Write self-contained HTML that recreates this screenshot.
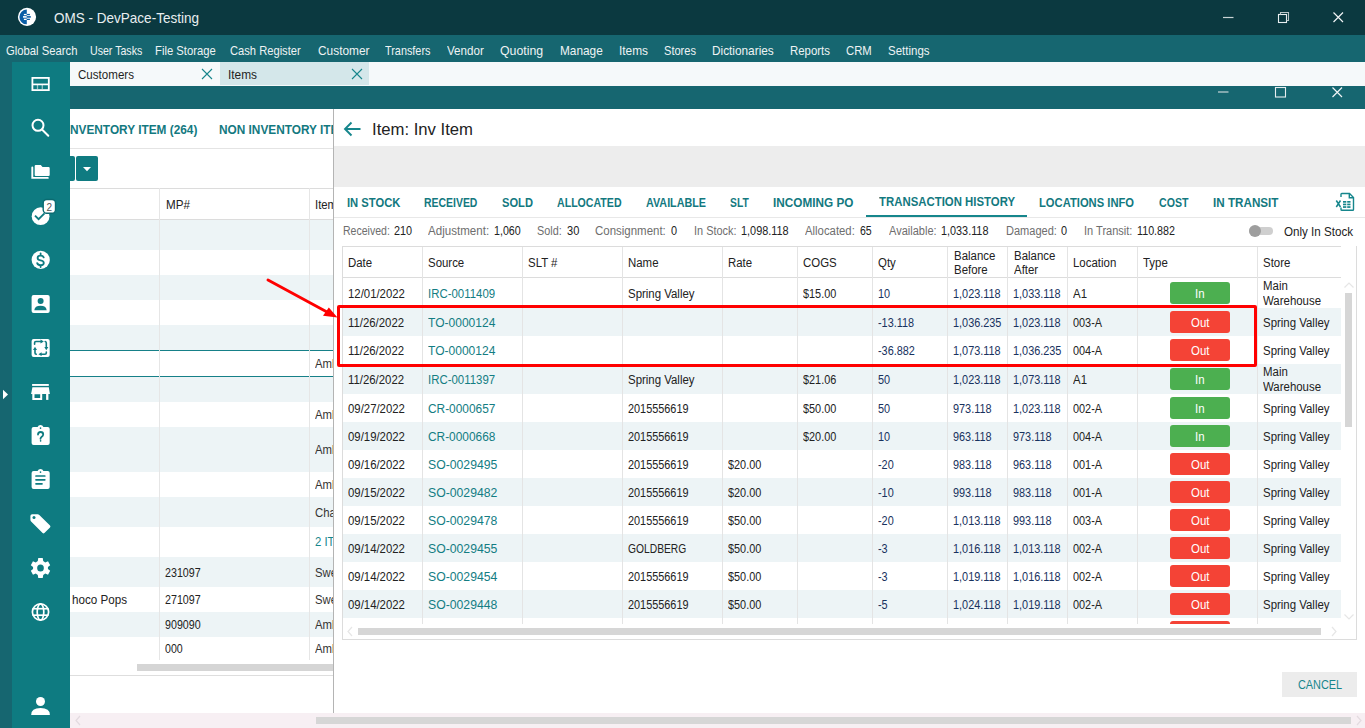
<!DOCTYPE html><html><head><meta charset="utf-8"><style>
html,body{margin:0;padding:0;}
body{width:1365px;height:728px;position:relative;overflow:hidden;background:#fff;font-family:"Liberation Sans",sans-serif;}
.t{position:absolute;white-space:nowrap;}
</style></head><body>
<div style="position:absolute;left:0px;top:0px;width:1365px;height:35px;background:#0b3940;"></div>
<svg style="position:absolute;left:17px;top:7px" width="20" height="20" viewBox="0 0 20 20">
<circle cx="10" cy="9.9" r="9.1" fill="#fff"/>
<path d="M9.8 2.5 A7.4 7.4 0 0 0 9.8 17.3 Z" fill="#0a5ea6"/>
<rect x="6.9" y="6.9" width="2.9" height="1.3" fill="#fff"/>
<rect x="6" y="9.1" width="3.8" height="1.6" fill="#fff"/>
<rect x="6.9" y="11.7" width="2.9" height="1.3" fill="#fff"/>
<rect x="9.8" y="6.9" width="3.1" height="1.3" fill="#0a5ea6"/>
<rect x="9.8" y="9.1" width="4" height="1.6" fill="#0a5ea6"/>
<rect x="9.8" y="11.7" width="3.1" height="1.3" fill="#0a5ea6"/>
</svg>
<div class="t" style="left:54.25px;top:11px;font-size:14.5px;line-height:14.5px;color:#e8eef0;transform:scaleX(0.9320);transform-origin:0 0;">OMS - DevPace-Testing</div>
<svg style="position:absolute;left:1215px;top:5px" width="140" height="25" viewBox="0 0 140 25">
<line x1="8" y1="12.5" x2="18.5" y2="12.5" stroke="#c9d3d5" stroke-width="1.2"/>
<rect x="63.5" y="9.5" width="8" height="8" fill="none" stroke="#e8eef0" stroke-width="1.1"/>
<path d="M65.5 9.5 V7.5 H73.5 V15.5 H71.5" fill="none" stroke="#b9c6c8" stroke-width="1.1"/>
<path d="M118.5 7.5 L128 17 M128 7.5 L118.5 17" stroke="#f0f4f5" stroke-width="1.2"/>
</svg>
<div style="position:absolute;left:0px;top:35px;width:1365px;height:27px;background:#166670;"></div>
<div class="t" style="left:6.00px;top:45px;font-size:12.8px;line-height:12.8px;color:#eef3f4;transform:scaleX(0.8811);transform-origin:0 0;">Global Search</div>
<div class="t" style="left:90.30px;top:45px;font-size:12.8px;line-height:12.8px;color:#eef3f4;transform:scaleX(0.8288);transform-origin:0 0;">User Tasks</div>
<div class="t" style="left:155.00px;top:45px;font-size:12.8px;line-height:12.8px;color:#eef3f4;transform:scaleX(0.8798);transform-origin:0 0;">File Storage</div>
<div class="t" style="left:230.20px;top:45px;font-size:12.8px;line-height:12.8px;color:#eef3f4;transform:scaleX(0.8724);transform-origin:0 0;">Cash Register</div>
<div class="t" style="left:317.50px;top:45px;font-size:12.8px;line-height:12.8px;color:#eef3f4;transform:scaleX(0.9292);transform-origin:0 0;">Customer</div>
<div class="t" style="left:385.30px;top:45px;font-size:12.8px;line-height:12.8px;color:#eef3f4;transform:scaleX(0.8484);transform-origin:0 0;">Transfers</div>
<div class="t" style="left:447.30px;top:45px;font-size:12.8px;line-height:12.8px;color:#eef3f4;transform:scaleX(0.9069);transform-origin:0 0;">Vendor</div>
<div class="t" style="left:500.20px;top:45px;font-size:12.8px;line-height:12.8px;color:#eef3f4;transform:scaleX(0.9621);transform-origin:0 0;">Quoting</div>
<div class="t" style="left:560.00px;top:45px;font-size:12.8px;line-height:12.8px;color:#eef3f4;transform:scaleX(0.9241);transform-origin:0 0;">Manage</div>
<div class="t" style="left:618.80px;top:45px;font-size:12.8px;line-height:12.8px;color:#eef3f4;transform:scaleX(0.9285);transform-origin:0 0;">Items</div>
<div class="t" style="left:664.00px;top:45px;font-size:12.8px;line-height:12.8px;color:#eef3f4;transform:scaleX(0.8651);transform-origin:0 0;">Stores</div>
<div class="t" style="left:712.20px;top:45px;font-size:12.8px;line-height:12.8px;color:#eef3f4;transform:scaleX(0.9234);transform-origin:0 0;">Dictionaries</div>
<div class="t" style="left:790.00px;top:45px;font-size:12.8px;line-height:12.8px;color:#eef3f4;transform:scaleX(0.8906);transform-origin:0 0;">Reports</div>
<div class="t" style="left:846.40px;top:45px;font-size:12.8px;line-height:12.8px;color:#eef3f4;transform:scaleX(0.8840);transform-origin:0 0;">CRM</div>
<div class="t" style="left:888.30px;top:45px;font-size:12.8px;line-height:12.8px;color:#eef3f4;transform:scaleX(0.8981);transform-origin:0 0;">Settings</div>
<div style="position:absolute;left:0px;top:62px;width:12px;height:666px;background:#166670;"></div>
<div style="position:absolute;left:12px;top:62px;width:58px;height:666px;background:#0e7b81;"></div>
<div style="position:absolute;left:70px;top:62px;width:1295px;height:24px;background:#f5f9fa;"></div>
<div style="position:absolute;left:220px;top:62px;width:149px;height:23px;background:#d4e7ea;"></div>
<div class="t" style="left:78.30px;top:69px;font-size:12.2px;line-height:12.2px;color:#1f1f1f;transform:scaleX(0.9503);transform-origin:0 0;">Customers</div>
<div class="t" style="left:228.00px;top:69px;font-size:12.2px;line-height:12.2px;color:#1f1f1f;transform:scaleX(0.9742);transform-origin:0 0;">Items</div>
<svg style="position:absolute;left:201px;top:68px" width="12" height="12"><path d="M1 1 L11 11 M11 1 L1 11" stroke="#16868c" stroke-width="1.1"/></svg>
<svg style="position:absolute;left:351px;top:68px" width="12" height="12"><path d="M1 1 L11 11 M11 1 L1 11" stroke="#16868c" stroke-width="1.1"/></svg>
<div style="position:absolute;left:70px;top:86px;width:1295px;height:23px;background:#166670;"></div>
<svg style="position:absolute;left:1210px;top:84px" width="145" height="18" viewBox="0 0 145 18">
<line x1="8" y1="8" x2="18.5" y2="8" stroke="#c9d6d8" stroke-width="1.2"/>
<rect x="65.5" y="3.5" width="10" height="9.5" fill="none" stroke="#e8eef0" stroke-width="1.1"/>
<path d="M122.5 3.5 L132 13 M132 3.5 L122.5 13" stroke="#f0f4f5" stroke-width="1.2"/>
</svg>
<svg style="position:absolute;left:0;top:0" width="70" height="728" viewBox="0 0 70 728">
<g fill="none" stroke="#ffffff">
 <rect x="32.4" y="77.9" width="16.4" height="12.2" stroke-width="1.8"/>
 <line x1="32.4" y1="84.4" x2="48.8" y2="84.4" stroke-width="1.7"/>
 <line x1="37.5" y1="85" x2="37.5" y2="89" stroke-width="1.3" stroke-opacity=".55"/>
 <line x1="42.3" y1="85" x2="42.3" y2="89" stroke-width="1.3" stroke-opacity=".55"/>
 <circle cx="38" cy="125.3" r="5.5" stroke-width="2"/>
 <line x1="42" y1="129.5" x2="48.3" y2="135.8" stroke-width="2" stroke-linecap="round"/>
 <path d="M32.3 167.5 V177.9 H47.8" stroke-width="1.9" stroke-linecap="round"/>
</g>
<path d="M35.8 165 H40.8 L42.5 167 H48.6 Q49.7 167 49.7 168.2 V174.9 Q49.7 176 48.6 176 H35.8 Q34.7 176 34.7 174.9 V166.1 Q34.7 165 35.8 165 Z" fill="#ffffff"/>
<circle cx="40.6" cy="216.2" r="8.9" fill="#ffffff"/>
<path d="M35 215.6 L38.6 219.2 L44.5 213.3" fill="none" stroke="#0e7b81" stroke-width="1.9"/>
<rect x="43.2" y="199.5" width="12.3" height="13.8" rx="3.5" fill="#ffffff" stroke="#0b6b71" stroke-width="1.4"/>
<text x="49.4" y="210.6" font-family="Liberation Sans" font-size="10" fill="#555" text-anchor="middle">2</text>
<circle cx="40.7" cy="259.9" r="9.1" fill="#ffffff"/>
<path d="M43.7 257.4 Q43 255.6 40.6 255.6 Q37.6 255.6 37.6 257.9 Q37.6 259.8 40.6 260.3 Q43.8 260.8 43.8 262.9 Q43.8 265.1 40.6 265.1 Q37.9 265.1 37.2 263.1 M40.6 253.3 V255.6 M40.6 265.1 V267" fill="none" stroke="#0e7b81" stroke-width="1.8" stroke-linecap="round"/>
<rect x="31.6" y="295" width="18.1" height="17.9" rx="2" fill="#ffffff"/>
<circle cx="40.6" cy="301" r="3" fill="#0e7b81"/>
<path d="M34.3 310.2 Q34.8 305.8 40.5 305.8 Q46.2 305.8 46.7 310.2 Z" fill="#0e7b81"/>
<rect x="31.6" y="339" width="18.1" height="18" rx="2" fill="#ffffff"/>
<g fill="none" stroke="#0e7b81" stroke-width="1.6" stroke-linecap="round">
 <path d="M34.6 344.2 V342.8 Q34.6 341.5 35.9 341.5 H41.2"/>
 <path d="M45.2 341.5 Q46.3 341.6 46.3 343 V346.8"/>
 <path d="M46.3 352 V353 Q46.3 354.2 45 354.2 H41"/>
 <path d="M36.3 354.3 Q35 354.2 35 353 V349.5"/>
</g>
<g fill="#0e7b81">
 <path d="M40.5 339.6 L43.8 341.5 L40.5 343.4 Z"/>
 <path d="M44.3 347 L48.3 347 L46.3 350.2 Z"/>
 <path d="M41.6 352.3 L38.4 354.2 L41.6 356.1 Z"/>
 <path d="M33 350 L37 350 L35 346.8 Z"/>
</g>
<path d="M3 389.8 L8 394.5 L3 399.2 Z" fill="#ffffff"/>
<rect x="32.1" y="384" width="16.7" height="1.9" fill="#ffffff"/>
<path d="M32.4 387.3 H48.8 L49.9 393.9 H31.1 Z" fill="#ffffff"/>
<path d="M32.3 393.9 H42.2 V399.9 H32.3 Z M34.5 394.3 V397.9 H40.2 V394.3 Z" fill="#ffffff" fill-rule="evenodd"/>
<rect x="46.1" y="393.9" width="2.3" height="6" fill="#ffffff"/>
<path d="M33.6 427 H37.6 Q38.4 425 40.5 425 Q42.6 425 43.4 427 H47.7 Q49.7 427 49.7 429 V442.9 Q49.7 444.9 47.7 444.9 H33.6 Q31.6 444.9 31.6 442.9 V429 Q31.6 427 33.6 427 Z" fill="#ffffff"/>
<rect x="39.7" y="427.3" width="1.6" height="1.8" rx=".8" fill="#0e7b81"/>
<path d="M38 434.6 Q38 432 40.6 432 Q43.2 432 43.2 434.4 Q43.2 435.9 41.5 436.9 Q40.5 437.6 40.5 438.8" fill="none" stroke="#0e7b81" stroke-width="1.8" stroke-linecap="round"/>
<rect x="39.8" y="440" width="1.6" height="1.8" rx=".7" fill="#0e7b81"/>
<path d="M33.6 471 H37.6 Q38.4 469 40.5 469 Q42.6 469 43.4 471 H47.7 Q49.7 471 49.7 473 V486.9 Q49.7 488.9 47.7 488.9 H33.6 Q31.6 488.9 31.6 486.9 V473 Q31.6 471 33.6 471 Z" fill="#ffffff"/>
<rect x="39.7" y="471.3" width="1.6" height="1.8" rx=".8" fill="#0e7b81"/>
<g stroke="#0e7b81" stroke-width="1.7" stroke-linecap="round">
 <line x1="36" y1="476" x2="44.8" y2="476"/>
 <line x1="36" y1="479.8" x2="44.8" y2="479.8"/>
 <line x1="36" y1="483.8" x2="42" y2="483.8"/>
</g>
<path d="M32.2 514.2 H37.6 Q38.6 514.2 39.3 514.9 L50 525.6 Q50.9 526.5 50 527.4 L44.4 533 Q43.5 533.9 42.6 533 L31.1 521.5 Q30.4 520.8 30.4 519.8 V516 Q30.4 514.2 32.2 514.2 Z" fill="#ffffff"/>
<circle cx="34" cy="517.5" r="1.5" fill="#0e7b81"/>
<g transform="translate(40.5 568) scale(0.93 1)">
 <path d="M-2.4 -10 H2.4 L2.9 -6.9 L5.1 -5.6 L8.1 -6.7 L10.4 -2.8 L8 -0.9 V0.9 L10.4 2.8 L8.1 6.7 L5.1 5.6 L2.9 6.9 L2.4 10 H-2.4 L-2.9 6.9 L-5.1 5.6 L-8.1 6.7 L-10.4 2.8 L-8 0.9 V-0.9 L-10.4 -2.8 L-8.1 -6.7 L-5.1 -5.6 L-2.9 -6.9 Z" fill="#ffffff"/>
 <circle r="3.6" fill="#0e7b81"/>
</g>
<g fill="none" stroke="#ffffff" stroke-width="1.7">
 <circle cx="40.5" cy="612" r="8.1"/>
 <ellipse cx="40.5" cy="612" rx="3.3" ry="8.1"/>
 <line x1="32.5" y1="608.7" x2="48.5" y2="608.7"/>
 <line x1="32.5" y1="615.2" x2="48.5" y2="615.2"/>
</g>
<circle cx="40.5" cy="701.5" r="4.5" fill="#ffffff"/>
<path d="M31.2 714.9 Q31.2 708.1 40.5 708.1 Q49.9 708.1 49.9 714.9 Z" fill="#ffffff"/>
</svg>
<div style="position:absolute;left:70px;top:109px;width:263px;height:604px;overflow:hidden;background:#fff">
<div style="position:absolute;left:-70px;top:-109px;width:1365px;height:728px"><div class="t" style="left:70.00px;top:124px;font-size:12.9px;line-height:12.9px;color:#13797f;font-weight:bold;transform:scaleX(0.9178);transform-origin:0 0;">NVENTORY ITEM (264)</div>
<div class="t" style="left:218.70px;top:124px;font-size:12.9px;line-height:12.9px;color:#13797f;font-weight:bold;transform:scaleX(0.9178);transform-origin:0 0;">NON INVENTORY ITEMS</div>
<div style="position:absolute;left:70px;top:148px;width:263px;height:1px;background:#e4e4e4;"></div>
<div style="position:absolute;left:60px;top:156px;width:14.5px;height:25px;background:#0f7b81;border-radius:0 2px 2px 0;"></div>
<div style="position:absolute;left:76.4px;top:156px;width:21.5px;height:25px;background:#0f7b81;border-radius:2px;"></div>
<svg style="position:absolute;left:82px;top:166px" width="10" height="6"><path d="M1 1 H9 L5 5.2 Z" fill="#fff"/></svg>
<div style="position:absolute;left:70px;top:188px;width:263px;height:1px;background:#dcdcdc;"></div>
<div style="position:absolute;left:70px;top:219px;width:263px;height:1px;background:#dcdcdc;"></div>
<div style="position:absolute;left:70px;top:220px;width:263px;height:30px;background:#edf4f6;"></div>
<div style="position:absolute;left:70px;top:275px;width:263px;height:25px;background:#edf4f6;"></div>
<div style="position:absolute;left:70px;top:325px;width:263px;height:25px;background:#edf4f6;"></div>
<div style="position:absolute;left:70px;top:377px;width:263px;height:25px;background:#edf4f6;"></div>
<div style="position:absolute;left:70px;top:427px;width:263px;height:45px;background:#edf4f6;"></div>
<div style="position:absolute;left:70px;top:497px;width:263px;height:30px;background:#edf4f6;"></div>
<div style="position:absolute;left:70px;top:557px;width:263px;height:30px;background:#edf4f6;"></div>
<div style="position:absolute;left:70px;top:612px;width:263px;height:25px;background:#edf4f6;"></div>
<div style="position:absolute;left:70px;top:350px;width:263px;height:1px;background:#168088;"></div>
<div style="position:absolute;left:70px;top:376px;width:263px;height:1px;background:#168088;"></div>
<div style="position:absolute;left:159px;top:188px;width:1px;height:472px;background:#e6e6e6;"></div>
<div style="position:absolute;left:309px;top:188px;width:1px;height:472px;background:#e6e6e6;"></div>
<div class="t" style="left:165.80px;top:199px;font-size:12.2px;line-height:12.2px;color:#222;transform:scaleX(0.9550);transform-origin:0 0;">MP#</div>
<div class="t" style="left:315.00px;top:199px;font-size:12.2px;line-height:12.2px;color:#222;transform:scaleX(0.9295);transform-origin:0 0;">Item</div>
<div class="t" style="left:315.00px;top:358px;font-size:12.2px;line-height:12.2px;color:#333;transform:scaleX(0.9300);transform-origin:0 0;">Ambient</div>
<div class="t" style="left:315.00px;top:409px;font-size:12.2px;line-height:12.2px;color:#333;transform:scaleX(0.9300);transform-origin:0 0;">Ambient</div>
<div class="t" style="left:315.00px;top:444px;font-size:12.2px;line-height:12.2px;color:#333;transform:scaleX(0.9300);transform-origin:0 0;">Ambient</div>
<div class="t" style="left:315.00px;top:479px;font-size:12.2px;line-height:12.2px;color:#333;transform:scaleX(0.9300);transform-origin:0 0;">Ambient</div>
<div class="t" style="left:315.00px;top:507px;font-size:12.2px;line-height:12.2px;color:#333;transform:scaleX(0.9300);transform-origin:0 0;">Chanel</div>
<div class="t" style="left:315.00px;top:567px;font-size:12.2px;line-height:12.2px;color:#333;transform:scaleX(0.9300);transform-origin:0 0;">Sweets</div>
<div class="t" style="left:315.00px;top:594px;font-size:12.2px;line-height:12.2px;color:#333;transform:scaleX(0.9300);transform-origin:0 0;">Sweets</div>
<div class="t" style="left:315.00px;top:619px;font-size:12.2px;line-height:12.2px;color:#333;transform:scaleX(0.9300);transform-origin:0 0;">Ambient</div>
<div class="t" style="left:315.00px;top:643px;font-size:12.2px;line-height:12.2px;color:#333;transform:scaleX(0.9300);transform-origin:0 0;">Ambient</div>
<div class="t" style="left:315.00px;top:536px;font-size:12.2px;line-height:12.2px;color:#16868c;transform:scaleX(0.9300);transform-origin:0 0;">2 ITEMS</div>
<div class="t" style="left:165.00px;top:567px;font-size:12.2px;line-height:12.2px;color:#222;transform:scaleX(0.8761);transform-origin:0 0;">231097</div>
<div class="t" style="left:165.00px;top:594px;font-size:12.2px;line-height:12.2px;color:#222;transform:scaleX(0.8761);transform-origin:0 0;">271097</div>
<div class="t" style="left:165.00px;top:619px;font-size:12.2px;line-height:12.2px;color:#222;transform:scaleX(0.8761);transform-origin:0 0;">909090</div>
<div class="t" style="left:165.00px;top:643px;font-size:12.2px;line-height:12.2px;color:#222;transform:scaleX(0.8700);transform-origin:0 0;">000</div>
<div class="t" style="left:71.80px;top:594px;font-size:12.2px;line-height:12.2px;color:#222;transform:scaleX(0.9548);transform-origin:0 0;">hoco Pops</div>
<div style="position:absolute;left:137px;top:664px;width:196px;height:7px;background:#d5d5d5;"></div>
<div style="position:absolute;left:70px;top:675px;width:263px;height:1px;background:#dedede;"></div></div></div>
<div style="position:absolute;left:70px;top:713px;width:1295px;height:15px;background:#f7eff3;"></div>
<svg style="position:absolute;left:74px;top:715px" width="8" height="11"><path d="M6 1 L2 5.5 L6 10" fill="none" stroke="#e3dbe0" stroke-width="1.2"/></svg>
<div style="position:absolute;left:316px;top:717px;width:1035px;height:7px;background:#d6d6d6;"></div>
<svg style="position:absolute;left:1355px;top:715px" width="8" height="11"><path d="M2 1 L6 5.5 L2 10" fill="none" stroke="#e3dbe0" stroke-width="1.2"/></svg>
<div style="position:absolute;left:333px;top:109px;width:1032px;height:604px;background:#fff;"></div>
<div style="position:absolute;left:333px;top:109px;width:1px;height:604px;background:#b4b4b4;"></div>
<svg style="position:absolute;left:343px;top:121px" width="19" height="16"><path d="M2 8 H17.5 M8.5 1.5 L2 8 L8.5 14.5" fill="none" stroke="#16868c" stroke-width="1.9"/></svg>
<div class="t" style="left:372.20px;top:122px;font-size:16px;line-height:16px;color:#222;transform:scaleX(1.0417);transform-origin:0 0;">Item: Inv Item</div>
<div style="position:absolute;left:334px;top:146px;width:1031px;height:41px;background:#ededed;"></div>
<div class="t" style="left:346.50px;top:197px;font-size:12.9px;line-height:12.9px;color:#13797f;font-weight:bold;transform:scaleX(0.8713);transform-origin:0 0;">IN STOCK</div>
<div class="t" style="left:424.30px;top:197px;font-size:12.9px;line-height:12.9px;color:#13797f;font-weight:bold;transform:scaleX(0.8101);transform-origin:0 0;">RECEIVED</div>
<div class="t" style="left:501.50px;top:197px;font-size:12.9px;line-height:12.9px;color:#13797f;font-weight:bold;transform:scaleX(0.8644);transform-origin:0 0;">SOLD</div>
<div class="t" style="left:556.90px;top:197px;font-size:12.9px;line-height:12.9px;color:#13797f;font-weight:bold;transform:scaleX(0.8223);transform-origin:0 0;">ALLOCATED</div>
<div class="t" style="left:646.00px;top:197px;font-size:12.9px;line-height:12.9px;color:#13797f;font-weight:bold;transform:scaleX(0.8350);transform-origin:0 0;">AVAILABLE</div>
<div class="t" style="left:729.70px;top:197px;font-size:12.9px;line-height:12.9px;color:#13797f;font-weight:bold;transform:scaleX(0.8009);transform-origin:0 0;">SLT</div>
<div class="t" style="left:773.20px;top:197px;font-size:12.9px;line-height:12.9px;color:#13797f;font-weight:bold;transform:scaleX(0.9125);transform-origin:0 0;">INCOMING PO</div>
<div class="t" style="left:878.50px;top:196px;font-size:12.9px;line-height:12.9px;color:#13797f;font-weight:bold;transform:scaleX(0.8836);transform-origin:0 0;">TRANSACTION HISTORY</div>
<div class="t" style="left:1039.40px;top:197px;font-size:12.9px;line-height:12.9px;color:#13797f;font-weight:bold;transform:scaleX(0.8694);transform-origin:0 0;">LOCATIONS INFO</div>
<div class="t" style="left:1159.00px;top:197px;font-size:12.9px;line-height:12.9px;color:#13797f;font-weight:bold;transform:scaleX(0.8226);transform-origin:0 0;">COST</div>
<div class="t" style="left:1213.30px;top:197px;font-size:12.9px;line-height:12.9px;color:#13797f;font-weight:bold;transform:scaleX(0.9051);transform-origin:0 0;">IN TRANSIT</div>
<div style="position:absolute;left:334px;top:217px;width:1031px;height:1px;background:#e8e8e8;"></div>
<div style="position:absolute;left:865.5px;top:215px;width:161px;height:2px;background:#16868c;"></div>
<div class="t" style="left:342.80px;top:225px;font-size:12px;line-height:12px;color:#6e6e6e;transform:scaleX(0.8783);transform-origin:0 0;">Received:</div>
<div class="t" style="left:393.90px;top:225px;font-size:12.3px;line-height:12.3px;color:#222;transform:scaleX(0.8812);transform-origin:0 0;">210</div>
<div class="t" style="left:428.20px;top:225px;font-size:12px;line-height:12px;color:#6e6e6e;transform:scaleX(0.9643);transform-origin:0 0;">Adjustment:</div>
<div class="t" style="left:494.30px;top:225px;font-size:12.3px;line-height:12.3px;color:#222;transform:scaleX(0.8683);transform-origin:0 0;">1,060</div>
<div class="t" style="left:537.30px;top:225px;font-size:12px;line-height:12px;color:#6e6e6e;transform:scaleX(0.9028);transform-origin:0 0;">Sold:</div>
<div class="t" style="left:566.70px;top:225px;font-size:12.3px;line-height:12.3px;color:#222;transform:scaleX(0.9009);transform-origin:0 0;">30</div>
<div class="t" style="left:595.40px;top:225px;font-size:12px;line-height:12px;color:#6e6e6e;transform:scaleX(0.9562);transform-origin:0 0;">Consignment:</div>
<div class="t" style="left:671.30px;top:225px;font-size:12.3px;line-height:12.3px;color:#222;transform:scaleX(0.8856);transform-origin:0 0;">0</div>
<div class="t" style="left:693.70px;top:225px;font-size:12px;line-height:12px;color:#6e6e6e;transform:scaleX(0.9105);transform-origin:0 0;">In Stock:</div>
<div class="t" style="left:741.30px;top:225px;font-size:12.3px;line-height:12.3px;color:#222;transform:scaleX(0.8856);transform-origin:0 0;">1,098.118</div>
<div class="t" style="left:805.30px;top:225px;font-size:12px;line-height:12px;color:#6e6e6e;transform:scaleX(0.9453);transform-origin:0 0;">Allocated:</div>
<div class="t" style="left:859.80px;top:225px;font-size:12.3px;line-height:12.3px;color:#222;transform:scaleX(0.8570);transform-origin:0 0;">65</div>
<div class="t" style="left:888.60px;top:225px;font-size:12px;line-height:12px;color:#6e6e6e;transform:scaleX(0.9182);transform-origin:0 0;">Available:</div>
<div class="t" style="left:941.30px;top:225px;font-size:12.3px;line-height:12.3px;color:#222;transform:scaleX(0.8818);transform-origin:0 0;">1,033.118</div>
<div class="t" style="left:1005.50px;top:225px;font-size:12px;line-height:12px;color:#6e6e6e;transform:scaleX(0.9201);transform-origin:0 0;">Damaged:</div>
<div class="t" style="left:1060.90px;top:225px;font-size:12.3px;line-height:12.3px;color:#222;transform:scaleX(0.8856);transform-origin:0 0;">0</div>
<div class="t" style="left:1083.50px;top:225px;font-size:12px;line-height:12px;color:#6e6e6e;transform:scaleX(0.9188);transform-origin:0 0;">In Transit:</div>
<div class="t" style="left:1137.40px;top:225px;font-size:12.3px;line-height:12.3px;color:#222;transform:scaleX(0.8727);transform-origin:0 0;">110.882</div>
<div style="position:absolute;left:1249px;top:227px;width:24px;height:8px;background:#cfcfcf;border-radius:4px;"></div>
<div style="position:absolute;left:1249px;top:225px;width:12px;height:12px;border-radius:6px;background:#9e9e9e"></div>
<div class="t" style="left:1283.80px;top:226px;font-size:12.3px;line-height:12.3px;color:#222;transform:scaleX(0.9440);transform-origin:0 0;">Only In Stock</div>
<svg style="position:absolute;left:1334px;top:192px" width="22" height="20" viewBox="0 0 22 20">
<path d="M7 5 V2.3 Q7 1.5 7.8 1.5 H15.5 L19.5 5.5 V17.5 Q19.5 18.3 18.7 18.3 H7.8 Q7 18.3 7 17.5 V15.5" fill="none" stroke="#16868c" stroke-width="1.4"/>
<path d="M15.3 1.8 V5.7 H19.2" fill="none" stroke="#16868c" stroke-width="1.4"/>
<path d="M2.3 8.5 L6.5 15 M6.5 8.5 L2.3 15" stroke="#16868c" stroke-width="1.5"/>
<g fill="#16868c"><rect x="9" y="9" width="3.3" height="1.7"/><rect x="13.2" y="9" width="3.3" height="1.7"/><rect x="9" y="11.6" width="3.3" height="1.7"/><rect x="13.2" y="11.6" width="3.3" height="1.7"/><rect x="9" y="14.2" width="3.3" height="1.7"/><rect x="13.2" y="14.2" width="3.3" height="1.7"/></g>
</svg>
<div style="position:absolute;left:342px;top:246px;width:999px;height:1px;background:#dcdcdc;"></div>
<div style="position:absolute;left:342px;top:246px;width:1px;height:394px;background:#dcdcdc;"></div>
<div style="position:absolute;left:1356px;top:246px;width:1px;height:394px;background:#dcdcdc;"></div>
<div style="position:absolute;left:342px;top:639px;width:1015px;height:1px;background:#dcdcdc;"></div>
<div style="position:absolute;left:343px;top:247px;width:998px;height:377px;overflow:hidden">
<div style="position:absolute;left:-343px;top:-247px;width:1365px;height:728px"><div style="position:absolute;left:343px;top:308px;width:998px;height:28px;background:#edf4f6;"></div>
<div style="position:absolute;left:343px;top:364px;width:998px;height:30px;background:#edf4f6;"></div>
<div style="position:absolute;left:343px;top:422px;width:998px;height:28px;background:#edf4f6;"></div>
<div style="position:absolute;left:343px;top:478px;width:998px;height:28px;background:#edf4f6;"></div>
<div style="position:absolute;left:343px;top:534px;width:998px;height:28px;background:#edf4f6;"></div>
<div style="position:absolute;left:343px;top:590px;width:998px;height:28px;background:#edf4f6;"></div>
<div style="position:absolute;left:343px;top:277px;width:998px;height:1px;background:#dcdcdc;"></div>
<div style="position:absolute;left:422px;top:247px;width:1px;height:377px;background:#e4e4e4;"></div>
<div style="position:absolute;left:522px;top:247px;width:1px;height:377px;background:#e4e4e4;"></div>
<div style="position:absolute;left:622px;top:247px;width:1px;height:377px;background:#e4e4e4;"></div>
<div style="position:absolute;left:722px;top:247px;width:1px;height:377px;background:#e4e4e4;"></div>
<div style="position:absolute;left:797px;top:247px;width:1px;height:377px;background:#e4e4e4;"></div>
<div style="position:absolute;left:872px;top:247px;width:1px;height:377px;background:#e4e4e4;"></div>
<div style="position:absolute;left:947px;top:247px;width:1px;height:377px;background:#e4e4e4;"></div>
<div style="position:absolute;left:1007px;top:247px;width:1px;height:377px;background:#e4e4e4;"></div>
<div style="position:absolute;left:1067px;top:247px;width:1px;height:377px;background:#e4e4e4;"></div>
<div style="position:absolute;left:1137px;top:247px;width:1px;height:377px;background:#e4e4e4;"></div>
<div style="position:absolute;left:1257px;top:247px;width:1px;height:377px;background:#e4e4e4;"></div>
<div class="t" style="left:348.20px;top:257px;font-size:12.3px;line-height:12.3px;color:#222;transform:scaleX(0.9300);transform-origin:0 0;">Date</div>
<div class="t" style="left:428.20px;top:257px;font-size:12.3px;line-height:12.3px;color:#222;transform:scaleX(0.9300);transform-origin:0 0;">Source</div>
<div class="t" style="left:528.20px;top:257px;font-size:12.3px;line-height:12.3px;color:#222;transform:scaleX(0.9300);transform-origin:0 0;">SLT #</div>
<div class="t" style="left:628.20px;top:257px;font-size:12.3px;line-height:12.3px;color:#222;transform:scaleX(0.9300);transform-origin:0 0;">Name</div>
<div class="t" style="left:728.20px;top:257px;font-size:12.3px;line-height:12.3px;color:#222;transform:scaleX(0.9300);transform-origin:0 0;">Rate</div>
<div class="t" style="left:803.20px;top:257px;font-size:12.3px;line-height:12.3px;color:#222;transform:scaleX(0.9300);transform-origin:0 0;">COGS</div>
<div class="t" style="left:878.20px;top:257px;font-size:12.3px;line-height:12.3px;color:#222;transform:scaleX(0.9300);transform-origin:0 0;">Qty</div>
<div class="t" style="left:1073.20px;top:257px;font-size:12.3px;line-height:12.3px;color:#222;transform:scaleX(0.9300);transform-origin:0 0;">Location</div>
<div class="t" style="left:1143.20px;top:257px;font-size:12.3px;line-height:12.3px;color:#222;transform:scaleX(0.9300);transform-origin:0 0;">Type</div>
<div class="t" style="left:1263.20px;top:257px;font-size:12.3px;line-height:12.3px;color:#222;transform:scaleX(0.9300);transform-origin:0 0;">Store</div>
<div class="t" style="left:953.50px;top:250px;font-size:12.3px;line-height:12.3px;color:#222;transform:scaleX(0.9300);transform-origin:0 0;">Balance</div>
<div class="t" style="left:953.50px;top:264px;font-size:12.3px;line-height:12.3px;color:#222;transform:scaleX(0.9300);transform-origin:0 0;">Before</div>
<div class="t" style="left:1013.50px;top:250px;font-size:12.3px;line-height:12.3px;color:#222;transform:scaleX(0.9300);transform-origin:0 0;">Balance</div>
<div class="t" style="left:1013.50px;top:264px;font-size:12.3px;line-height:12.3px;color:#222;transform:scaleX(0.9300);transform-origin:0 0;">After</div>
<div class="t" style="left:348.00px;top:288px;font-size:12.3px;line-height:12.3px;color:#222;transform:scaleX(0.9250);transform-origin:0 0;">12/01/2022</div>
<div class="t" style="left:428.00px;top:288px;font-size:12.3px;line-height:12.3px;color:#137d83;transform:scaleX(0.9294);transform-origin:0 0;">IRC-0011409</div>
<div class="t" style="left:628.00px;top:288px;font-size:12.3px;line-height:12.3px;color:#222;transform:scaleX(0.9300);transform-origin:0 0;">Spring Valley</div>
<div class="t" style="left:803.00px;top:288px;font-size:12.3px;line-height:12.3px;color:#222;transform:scaleX(0.8850);transform-origin:0 0;">$15.00</div>
<div class="t" style="left:878.00px;top:288px;font-size:12.3px;line-height:12.3px;color:#18325e;transform:scaleX(0.8850);transform-origin:0 0;">10</div>
<div class="t" style="left:953.00px;top:288px;font-size:12.3px;line-height:12.3px;color:#18325e;transform:scaleX(0.8850);transform-origin:0 0;">1,023.118</div>
<div class="t" style="left:1013.00px;top:288px;font-size:12.3px;line-height:12.3px;color:#18325e;transform:scaleX(0.8850);transform-origin:0 0;">1,033.118</div>
<div class="t" style="left:1073.00px;top:288px;font-size:12.3px;line-height:12.3px;color:#222;transform:scaleX(0.9300);transform-origin:0 0;">A1</div>
<div style="position:absolute;left:1170px;top:282.4px;width:60px;height:21.2px;border-radius:3px;background:#4caf50"></div>
<div class="t" style="left:1195.25px;top:288px;font-size:12.3px;line-height:12.3px;color:#fff;transform:scaleX(0.9300);transform-origin:0 0;">In</div>
<div class="t" style="left:1263.00px;top:280px;font-size:12.3px;line-height:12.3px;color:#222;transform:scaleX(0.9300);transform-origin:0 0;">Main</div>
<div class="t" style="left:1263.00px;top:295px;font-size:12.3px;line-height:12.3px;color:#222;transform:scaleX(0.9300);transform-origin:0 0;">Warehouse</div>
<div class="t" style="left:348.00px;top:317px;font-size:12.3px;line-height:12.3px;color:#222;transform:scaleX(0.9250);transform-origin:0 0;">11/26/2022</div>
<div class="t" style="left:428.00px;top:317px;font-size:12.3px;line-height:12.3px;color:#137d83;transform:scaleX(0.9785);transform-origin:0 0;">TO-0000124</div>
<div class="t" style="left:878.00px;top:317px;font-size:12.3px;line-height:12.3px;color:#18325e;transform:scaleX(0.8850);transform-origin:0 0;">-13.118</div>
<div class="t" style="left:953.00px;top:317px;font-size:12.3px;line-height:12.3px;color:#18325e;transform:scaleX(0.8850);transform-origin:0 0;">1,036.235</div>
<div class="t" style="left:1013.00px;top:317px;font-size:12.3px;line-height:12.3px;color:#18325e;transform:scaleX(0.8850);transform-origin:0 0;">1,023.118</div>
<div class="t" style="left:1073.00px;top:317px;font-size:12.3px;line-height:12.3px;color:#222;transform:scaleX(0.8850);transform-origin:0 0;">003-A</div>
<div style="position:absolute;left:1170px;top:311.4px;width:60px;height:21.2px;border-radius:3px;background:#f44336"></div>
<div class="t" style="left:1190.79px;top:317px;font-size:12.3px;line-height:12.3px;color:#fff;transform:scaleX(0.9300);transform-origin:0 0;">Out</div>
<div class="t" style="left:1263.00px;top:317px;font-size:12.3px;line-height:12.3px;color:#222;transform:scaleX(0.9300);transform-origin:0 0;">Spring Valley</div>
<div class="t" style="left:348.00px;top:345px;font-size:12.3px;line-height:12.3px;color:#222;transform:scaleX(0.9250);transform-origin:0 0;">11/26/2022</div>
<div class="t" style="left:428.00px;top:345px;font-size:12.3px;line-height:12.3px;color:#137d83;transform:scaleX(0.9785);transform-origin:0 0;">TO-0000124</div>
<div class="t" style="left:878.00px;top:345px;font-size:12.3px;line-height:12.3px;color:#18325e;transform:scaleX(0.8850);transform-origin:0 0;">-36.882</div>
<div class="t" style="left:953.00px;top:345px;font-size:12.3px;line-height:12.3px;color:#18325e;transform:scaleX(0.8850);transform-origin:0 0;">1,073.118</div>
<div class="t" style="left:1013.00px;top:345px;font-size:12.3px;line-height:12.3px;color:#18325e;transform:scaleX(0.8850);transform-origin:0 0;">1,036.235</div>
<div class="t" style="left:1073.00px;top:345px;font-size:12.3px;line-height:12.3px;color:#222;transform:scaleX(0.8850);transform-origin:0 0;">004-A</div>
<div style="position:absolute;left:1170px;top:339.4px;width:60px;height:21.2px;border-radius:3px;background:#f44336"></div>
<div class="t" style="left:1190.79px;top:345px;font-size:12.3px;line-height:12.3px;color:#fff;transform:scaleX(0.9300);transform-origin:0 0;">Out</div>
<div class="t" style="left:1263.00px;top:345px;font-size:12.3px;line-height:12.3px;color:#222;transform:scaleX(0.9300);transform-origin:0 0;">Spring Valley</div>
<div class="t" style="left:348.00px;top:374px;font-size:12.3px;line-height:12.3px;color:#222;transform:scaleX(0.9250);transform-origin:0 0;">11/26/2022</div>
<div class="t" style="left:428.00px;top:374px;font-size:12.3px;line-height:12.3px;color:#137d83;transform:scaleX(0.9294);transform-origin:0 0;">IRC-0011397</div>
<div class="t" style="left:628.00px;top:374px;font-size:12.3px;line-height:12.3px;color:#222;transform:scaleX(0.9300);transform-origin:0 0;">Spring Valley</div>
<div class="t" style="left:803.00px;top:374px;font-size:12.3px;line-height:12.3px;color:#222;transform:scaleX(0.8850);transform-origin:0 0;">$21.06</div>
<div class="t" style="left:878.00px;top:374px;font-size:12.3px;line-height:12.3px;color:#18325e;transform:scaleX(0.8850);transform-origin:0 0;">50</div>
<div class="t" style="left:953.00px;top:374px;font-size:12.3px;line-height:12.3px;color:#18325e;transform:scaleX(0.8850);transform-origin:0 0;">1,023.118</div>
<div class="t" style="left:1013.00px;top:374px;font-size:12.3px;line-height:12.3px;color:#18325e;transform:scaleX(0.8850);transform-origin:0 0;">1,073.118</div>
<div class="t" style="left:1073.00px;top:374px;font-size:12.3px;line-height:12.3px;color:#222;transform:scaleX(0.9300);transform-origin:0 0;">A1</div>
<div style="position:absolute;left:1170px;top:368.4px;width:60px;height:21.2px;border-radius:3px;background:#4caf50"></div>
<div class="t" style="left:1195.25px;top:374px;font-size:12.3px;line-height:12.3px;color:#fff;transform:scaleX(0.9300);transform-origin:0 0;">In</div>
<div class="t" style="left:1263.00px;top:366px;font-size:12.3px;line-height:12.3px;color:#222;transform:scaleX(0.9300);transform-origin:0 0;">Main</div>
<div class="t" style="left:1263.00px;top:381px;font-size:12.3px;line-height:12.3px;color:#222;transform:scaleX(0.9300);transform-origin:0 0;">Warehouse</div>
<div class="t" style="left:348.00px;top:403px;font-size:12.3px;line-height:12.3px;color:#222;transform:scaleX(0.9250);transform-origin:0 0;">09/27/2022</div>
<div class="t" style="left:428.00px;top:403px;font-size:12.3px;line-height:12.3px;color:#137d83;transform:scaleX(0.9664);transform-origin:0 0;">CR-0000657</div>
<div class="t" style="left:628.00px;top:403px;font-size:12.3px;line-height:12.3px;color:#222;transform:scaleX(0.8850);transform-origin:0 0;">2015556619</div>
<div class="t" style="left:803.00px;top:403px;font-size:12.3px;line-height:12.3px;color:#222;transform:scaleX(0.8850);transform-origin:0 0;">$50.00</div>
<div class="t" style="left:878.00px;top:403px;font-size:12.3px;line-height:12.3px;color:#18325e;transform:scaleX(0.8850);transform-origin:0 0;">50</div>
<div class="t" style="left:953.00px;top:403px;font-size:12.3px;line-height:12.3px;color:#18325e;transform:scaleX(0.8850);transform-origin:0 0;">973.118</div>
<div class="t" style="left:1013.00px;top:403px;font-size:12.3px;line-height:12.3px;color:#18325e;transform:scaleX(0.8850);transform-origin:0 0;">1,023.118</div>
<div class="t" style="left:1073.00px;top:403px;font-size:12.3px;line-height:12.3px;color:#222;transform:scaleX(0.8850);transform-origin:0 0;">002-A</div>
<div style="position:absolute;left:1170px;top:397.4px;width:60px;height:21.2px;border-radius:3px;background:#4caf50"></div>
<div class="t" style="left:1195.25px;top:403px;font-size:12.3px;line-height:12.3px;color:#fff;transform:scaleX(0.9300);transform-origin:0 0;">In</div>
<div class="t" style="left:1263.00px;top:403px;font-size:12.3px;line-height:12.3px;color:#222;transform:scaleX(0.9300);transform-origin:0 0;">Spring Valley</div>
<div class="t" style="left:348.00px;top:431px;font-size:12.3px;line-height:12.3px;color:#222;transform:scaleX(0.9250);transform-origin:0 0;">09/19/2022</div>
<div class="t" style="left:428.00px;top:431px;font-size:12.3px;line-height:12.3px;color:#137d83;transform:scaleX(0.9664);transform-origin:0 0;">CR-0000668</div>
<div class="t" style="left:628.00px;top:431px;font-size:12.3px;line-height:12.3px;color:#222;transform:scaleX(0.8850);transform-origin:0 0;">2015556619</div>
<div class="t" style="left:803.00px;top:431px;font-size:12.3px;line-height:12.3px;color:#222;transform:scaleX(0.8850);transform-origin:0 0;">$20.00</div>
<div class="t" style="left:878.00px;top:431px;font-size:12.3px;line-height:12.3px;color:#18325e;transform:scaleX(0.8850);transform-origin:0 0;">10</div>
<div class="t" style="left:953.00px;top:431px;font-size:12.3px;line-height:12.3px;color:#18325e;transform:scaleX(0.8850);transform-origin:0 0;">963.118</div>
<div class="t" style="left:1013.00px;top:431px;font-size:12.3px;line-height:12.3px;color:#18325e;transform:scaleX(0.8850);transform-origin:0 0;">973.118</div>
<div class="t" style="left:1073.00px;top:431px;font-size:12.3px;line-height:12.3px;color:#222;transform:scaleX(0.8850);transform-origin:0 0;">004-A</div>
<div style="position:absolute;left:1170px;top:425.4px;width:60px;height:21.2px;border-radius:3px;background:#4caf50"></div>
<div class="t" style="left:1195.25px;top:431px;font-size:12.3px;line-height:12.3px;color:#fff;transform:scaleX(0.9300);transform-origin:0 0;">In</div>
<div class="t" style="left:1263.00px;top:431px;font-size:12.3px;line-height:12.3px;color:#222;transform:scaleX(0.9300);transform-origin:0 0;">Spring Valley</div>
<div class="t" style="left:348.00px;top:459px;font-size:12.3px;line-height:12.3px;color:#222;transform:scaleX(0.9250);transform-origin:0 0;">09/16/2022</div>
<div class="t" style="left:428.00px;top:459px;font-size:12.3px;line-height:12.3px;color:#137d83;transform:scaleX(0.9951);transform-origin:0 0;">SO-0029495</div>
<div class="t" style="left:628.00px;top:459px;font-size:12.3px;line-height:12.3px;color:#222;transform:scaleX(0.8850);transform-origin:0 0;">2015556619</div>
<div class="t" style="left:728.00px;top:459px;font-size:12.3px;line-height:12.3px;color:#222;transform:scaleX(0.8850);transform-origin:0 0;">$20.00</div>
<div class="t" style="left:878.00px;top:459px;font-size:12.3px;line-height:12.3px;color:#18325e;transform:scaleX(0.8850);transform-origin:0 0;">-20</div>
<div class="t" style="left:953.00px;top:459px;font-size:12.3px;line-height:12.3px;color:#18325e;transform:scaleX(0.8850);transform-origin:0 0;">983.118</div>
<div class="t" style="left:1013.00px;top:459px;font-size:12.3px;line-height:12.3px;color:#18325e;transform:scaleX(0.8850);transform-origin:0 0;">963.118</div>
<div class="t" style="left:1073.00px;top:459px;font-size:12.3px;line-height:12.3px;color:#222;transform:scaleX(0.8850);transform-origin:0 0;">001-A</div>
<div style="position:absolute;left:1170px;top:453.4px;width:60px;height:21.2px;border-radius:3px;background:#f44336"></div>
<div class="t" style="left:1190.79px;top:459px;font-size:12.3px;line-height:12.3px;color:#fff;transform:scaleX(0.9300);transform-origin:0 0;">Out</div>
<div class="t" style="left:1263.00px;top:459px;font-size:12.3px;line-height:12.3px;color:#222;transform:scaleX(0.9300);transform-origin:0 0;">Spring Valley</div>
<div class="t" style="left:348.00px;top:487px;font-size:12.3px;line-height:12.3px;color:#222;transform:scaleX(0.9250);transform-origin:0 0;">09/15/2022</div>
<div class="t" style="left:428.00px;top:487px;font-size:12.3px;line-height:12.3px;color:#137d83;transform:scaleX(0.9951);transform-origin:0 0;">SO-0029482</div>
<div class="t" style="left:628.00px;top:487px;font-size:12.3px;line-height:12.3px;color:#222;transform:scaleX(0.8850);transform-origin:0 0;">2015556619</div>
<div class="t" style="left:728.00px;top:487px;font-size:12.3px;line-height:12.3px;color:#222;transform:scaleX(0.8850);transform-origin:0 0;">$20.00</div>
<div class="t" style="left:878.00px;top:487px;font-size:12.3px;line-height:12.3px;color:#18325e;transform:scaleX(0.8850);transform-origin:0 0;">-10</div>
<div class="t" style="left:953.00px;top:487px;font-size:12.3px;line-height:12.3px;color:#18325e;transform:scaleX(0.8850);transform-origin:0 0;">993.118</div>
<div class="t" style="left:1013.00px;top:487px;font-size:12.3px;line-height:12.3px;color:#18325e;transform:scaleX(0.8850);transform-origin:0 0;">983.118</div>
<div class="t" style="left:1073.00px;top:487px;font-size:12.3px;line-height:12.3px;color:#222;transform:scaleX(0.8850);transform-origin:0 0;">001-A</div>
<div style="position:absolute;left:1170px;top:481.4px;width:60px;height:21.2px;border-radius:3px;background:#f44336"></div>
<div class="t" style="left:1190.79px;top:487px;font-size:12.3px;line-height:12.3px;color:#fff;transform:scaleX(0.9300);transform-origin:0 0;">Out</div>
<div class="t" style="left:1263.00px;top:487px;font-size:12.3px;line-height:12.3px;color:#222;transform:scaleX(0.9300);transform-origin:0 0;">Spring Valley</div>
<div class="t" style="left:348.00px;top:515px;font-size:12.3px;line-height:12.3px;color:#222;transform:scaleX(0.9250);transform-origin:0 0;">09/15/2022</div>
<div class="t" style="left:428.00px;top:515px;font-size:12.3px;line-height:12.3px;color:#137d83;transform:scaleX(0.9951);transform-origin:0 0;">SO-0029478</div>
<div class="t" style="left:628.00px;top:515px;font-size:12.3px;line-height:12.3px;color:#222;transform:scaleX(0.8850);transform-origin:0 0;">2015556619</div>
<div class="t" style="left:728.00px;top:515px;font-size:12.3px;line-height:12.3px;color:#222;transform:scaleX(0.8850);transform-origin:0 0;">$50.00</div>
<div class="t" style="left:878.00px;top:515px;font-size:12.3px;line-height:12.3px;color:#18325e;transform:scaleX(0.8850);transform-origin:0 0;">-20</div>
<div class="t" style="left:953.00px;top:515px;font-size:12.3px;line-height:12.3px;color:#18325e;transform:scaleX(0.8850);transform-origin:0 0;">1,013.118</div>
<div class="t" style="left:1013.00px;top:515px;font-size:12.3px;line-height:12.3px;color:#18325e;transform:scaleX(0.8850);transform-origin:0 0;">993.118</div>
<div class="t" style="left:1073.00px;top:515px;font-size:12.3px;line-height:12.3px;color:#222;transform:scaleX(0.8850);transform-origin:0 0;">003-A</div>
<div style="position:absolute;left:1170px;top:509.4px;width:60px;height:21.2px;border-radius:3px;background:#f44336"></div>
<div class="t" style="left:1190.79px;top:515px;font-size:12.3px;line-height:12.3px;color:#fff;transform:scaleX(0.9300);transform-origin:0 0;">Out</div>
<div class="t" style="left:1263.00px;top:515px;font-size:12.3px;line-height:12.3px;color:#222;transform:scaleX(0.9300);transform-origin:0 0;">Spring Valley</div>
<div class="t" style="left:348.00px;top:543px;font-size:12.3px;line-height:12.3px;color:#222;transform:scaleX(0.9250);transform-origin:0 0;">09/14/2022</div>
<div class="t" style="left:428.00px;top:543px;font-size:12.3px;line-height:12.3px;color:#137d83;transform:scaleX(0.9951);transform-origin:0 0;">SO-0029455</div>
<div class="t" style="left:628.00px;top:543px;font-size:12.3px;line-height:12.3px;color:#222;transform:scaleX(0.8360);transform-origin:0 0;">GOLDBERG</div>
<div class="t" style="left:728.00px;top:543px;font-size:12.3px;line-height:12.3px;color:#222;transform:scaleX(0.8850);transform-origin:0 0;">$50.00</div>
<div class="t" style="left:878.00px;top:543px;font-size:12.3px;line-height:12.3px;color:#18325e;transform:scaleX(0.8850);transform-origin:0 0;">-3</div>
<div class="t" style="left:953.00px;top:543px;font-size:12.3px;line-height:12.3px;color:#18325e;transform:scaleX(0.8850);transform-origin:0 0;">1,016.118</div>
<div class="t" style="left:1013.00px;top:543px;font-size:12.3px;line-height:12.3px;color:#18325e;transform:scaleX(0.8850);transform-origin:0 0;">1,013.118</div>
<div class="t" style="left:1073.00px;top:543px;font-size:12.3px;line-height:12.3px;color:#222;transform:scaleX(0.8850);transform-origin:0 0;">002-A</div>
<div style="position:absolute;left:1170px;top:537.4px;width:60px;height:21.2px;border-radius:3px;background:#f44336"></div>
<div class="t" style="left:1190.79px;top:543px;font-size:12.3px;line-height:12.3px;color:#fff;transform:scaleX(0.9300);transform-origin:0 0;">Out</div>
<div class="t" style="left:1263.00px;top:543px;font-size:12.3px;line-height:12.3px;color:#222;transform:scaleX(0.9300);transform-origin:0 0;">Spring Valley</div>
<div class="t" style="left:348.00px;top:571px;font-size:12.3px;line-height:12.3px;color:#222;transform:scaleX(0.9250);transform-origin:0 0;">09/14/2022</div>
<div class="t" style="left:428.00px;top:571px;font-size:12.3px;line-height:12.3px;color:#137d83;transform:scaleX(0.9951);transform-origin:0 0;">SO-0029454</div>
<div class="t" style="left:628.00px;top:571px;font-size:12.3px;line-height:12.3px;color:#222;transform:scaleX(0.8850);transform-origin:0 0;">2015556619</div>
<div class="t" style="left:728.00px;top:571px;font-size:12.3px;line-height:12.3px;color:#222;transform:scaleX(0.8850);transform-origin:0 0;">$50.00</div>
<div class="t" style="left:878.00px;top:571px;font-size:12.3px;line-height:12.3px;color:#18325e;transform:scaleX(0.8850);transform-origin:0 0;">-3</div>
<div class="t" style="left:953.00px;top:571px;font-size:12.3px;line-height:12.3px;color:#18325e;transform:scaleX(0.8850);transform-origin:0 0;">1,019.118</div>
<div class="t" style="left:1013.00px;top:571px;font-size:12.3px;line-height:12.3px;color:#18325e;transform:scaleX(0.8850);transform-origin:0 0;">1,016.118</div>
<div class="t" style="left:1073.00px;top:571px;font-size:12.3px;line-height:12.3px;color:#222;transform:scaleX(0.8850);transform-origin:0 0;">002-A</div>
<div style="position:absolute;left:1170px;top:565.4px;width:60px;height:21.2px;border-radius:3px;background:#f44336"></div>
<div class="t" style="left:1190.79px;top:571px;font-size:12.3px;line-height:12.3px;color:#fff;transform:scaleX(0.9300);transform-origin:0 0;">Out</div>
<div class="t" style="left:1263.00px;top:571px;font-size:12.3px;line-height:12.3px;color:#222;transform:scaleX(0.9300);transform-origin:0 0;">Spring Valley</div>
<div class="t" style="left:348.00px;top:599px;font-size:12.3px;line-height:12.3px;color:#222;transform:scaleX(0.9250);transform-origin:0 0;">09/14/2022</div>
<div class="t" style="left:428.00px;top:599px;font-size:12.3px;line-height:12.3px;color:#137d83;transform:scaleX(0.9951);transform-origin:0 0;">SO-0029448</div>
<div class="t" style="left:628.00px;top:599px;font-size:12.3px;line-height:12.3px;color:#222;transform:scaleX(0.8850);transform-origin:0 0;">2015556619</div>
<div class="t" style="left:728.00px;top:599px;font-size:12.3px;line-height:12.3px;color:#222;transform:scaleX(0.8850);transform-origin:0 0;">$50.00</div>
<div class="t" style="left:878.00px;top:599px;font-size:12.3px;line-height:12.3px;color:#18325e;transform:scaleX(0.8850);transform-origin:0 0;">-5</div>
<div class="t" style="left:953.00px;top:599px;font-size:12.3px;line-height:12.3px;color:#18325e;transform:scaleX(0.8850);transform-origin:0 0;">1,024.118</div>
<div class="t" style="left:1013.00px;top:599px;font-size:12.3px;line-height:12.3px;color:#18325e;transform:scaleX(0.8850);transform-origin:0 0;">1,019.118</div>
<div class="t" style="left:1073.00px;top:599px;font-size:12.3px;line-height:12.3px;color:#222;transform:scaleX(0.8850);transform-origin:0 0;">002-A</div>
<div style="position:absolute;left:1170px;top:593.4px;width:60px;height:21.2px;border-radius:3px;background:#f44336"></div>
<div class="t" style="left:1190.79px;top:599px;font-size:12.3px;line-height:12.3px;color:#fff;transform:scaleX(0.9300);transform-origin:0 0;">Out</div>
<div class="t" style="left:1263.00px;top:599px;font-size:12.3px;line-height:12.3px;color:#222;transform:scaleX(0.9300);transform-origin:0 0;">Spring Valley</div>
<div class="t" style="left:348.00px;top:627px;font-size:12.3px;line-height:12.3px;color:#222;transform:scaleX(0.9250);transform-origin:0 0;">09/14/2022</div>
<div class="t" style="left:428.00px;top:627px;font-size:12.3px;line-height:12.3px;color:#137d83;transform:scaleX(0.9951);transform-origin:0 0;">SO-0029447</div>
<div class="t" style="left:628.00px;top:627px;font-size:12.3px;line-height:12.3px;color:#222;transform:scaleX(0.8850);transform-origin:0 0;">2015556619</div>
<div class="t" style="left:728.00px;top:627px;font-size:12.3px;line-height:12.3px;color:#222;transform:scaleX(0.8850);transform-origin:0 0;">$50.00</div>
<div class="t" style="left:878.00px;top:627px;font-size:12.3px;line-height:12.3px;color:#18325e;transform:scaleX(0.8850);transform-origin:0 0;">-5</div>
<div class="t" style="left:953.00px;top:627px;font-size:12.3px;line-height:12.3px;color:#18325e;transform:scaleX(0.8850);transform-origin:0 0;">1,029.118</div>
<div class="t" style="left:1013.00px;top:627px;font-size:12.3px;line-height:12.3px;color:#18325e;transform:scaleX(0.8850);transform-origin:0 0;">1,024.118</div>
<div class="t" style="left:1073.00px;top:627px;font-size:12.3px;line-height:12.3px;color:#222;transform:scaleX(0.8850);transform-origin:0 0;">002-A</div>
<div style="position:absolute;left:1170px;top:621.4px;width:60px;height:21.2px;border-radius:3px;background:#f44336"></div>
<div class="t" style="left:1190.79px;top:627px;font-size:12.3px;line-height:12.3px;color:#fff;transform:scaleX(0.9300);transform-origin:0 0;">Out</div>
<div class="t" style="left:1263.00px;top:627px;font-size:12.3px;line-height:12.3px;color:#222;transform:scaleX(0.9300);transform-origin:0 0;">Spring Valley</div></div></div>
<div style="position:absolute;left:1345px;top:293px;width:7px;height:134px;background:#d6d6d6;"></div>
<svg style="position:absolute;left:1343px;top:281px" width="12" height="8"><path d="M1.5 6.5 L6 2 L10.5 6.5" fill="none" stroke="#e6e6e6" stroke-width="1.2"/></svg>
<svg style="position:absolute;left:1343px;top:613px" width="12" height="8"><path d="M1.5 1.5 L6 6 L10.5 1.5" fill="none" stroke="#e6e6e6" stroke-width="1.2"/></svg>
<div style="position:absolute;left:358px;top:628px;width:963px;height:7px;background:#d6d6d6;"></div>
<svg style="position:absolute;left:346px;top:626px" width="8" height="11"><path d="M6 1 L2 5.5 L6 10" fill="none" stroke="#e6e6e6" stroke-width="1.2"/></svg>
<svg style="position:absolute;left:1330px;top:626px" width="8" height="11"><path d="M2 1 L6 5.5 L2 10" fill="none" stroke="#e6e6e6" stroke-width="1.2"/></svg>
<div style="position:absolute;left:1282px;top:672px;width:75px;height:25px;background:#ececec;"></div>
<div class="t" style="left:1297.50px;top:679px;font-size:12.5px;line-height:12.5px;color:#16868c;transform:scaleX(0.8709);transform-origin:0 0;">CANCEL</div>
<div style="position:absolute;left:337px;top:305px;width:920px;height:62px;box-sizing:border-box;border:3px solid #ff0000;border-radius:2px"></div>
<svg style="position:absolute;left:0;top:0" width="1365" height="728"><line x1="268" y1="280" x2="327" y2="312" stroke="#ff0000" stroke-width="2.9" stroke-linecap="round"/><path d="M337.5 317.5 L323 315.8 L328.8 307.6 Z" fill="#ff0000"/></svg>
</body></html>
